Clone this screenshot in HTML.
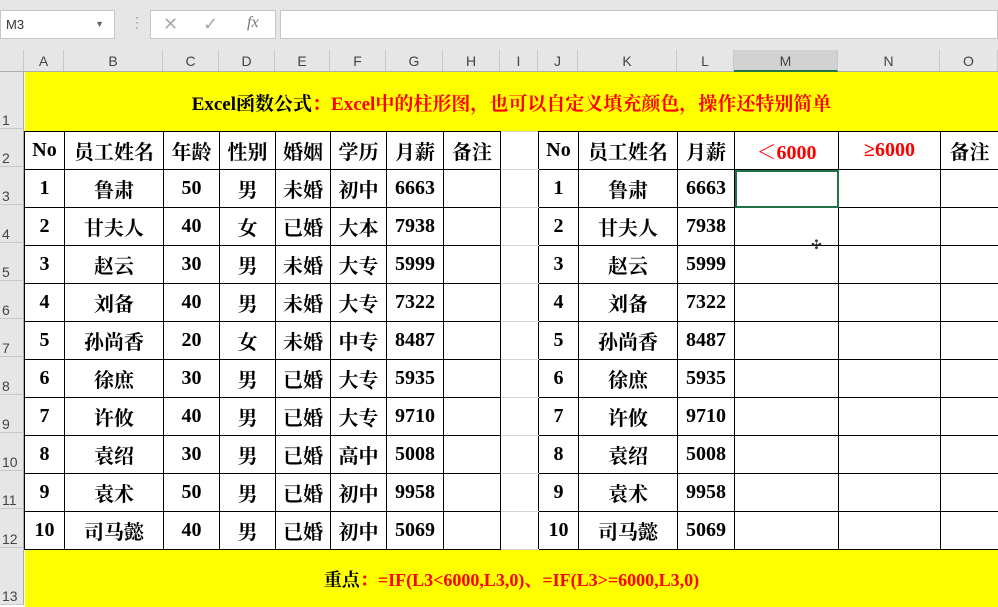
<!DOCTYPE html>
<html><head><meta charset="utf-8"><style>
body{margin:0;width:998px;height:605px;overflow:hidden;background:#fff;font-family:"Liberation Sans",sans-serif;position:relative}
.top{position:absolute;left:0;top:0;width:998px;height:50px;background:#e6e6e6}
.nb{position:absolute;left:0;top:10px;width:115px;height:29px;background:#fff;border:1px solid #c6c6c6;box-sizing:border-box;font-size:13px;line-height:27px;padding-left:5px;color:#333}
.fx{position:absolute;left:150px;top:10px;width:126px;height:29px;background:#fff;border:1px solid #c6c6c6;box-sizing:border-box;color:#aaa}
.fb{position:absolute;left:280px;top:10px;width:718px;height:29px;background:#fff;border:1px solid #c6c6c6;box-sizing:border-box}
.ch{position:absolute;top:50px;left:0;width:998px;height:22px;background:#e6e6e6;border-bottom:1px solid #ababab;box-sizing:border-box}
.ch div{position:absolute;top:0;height:21px;line-height:22px;text-align:center;font-size:14px;color:#444;border-right:1px solid #c8c8c8;box-sizing:border-box}
.rh{position:absolute;left:0;width:24px;background:#e6e6e6;border-bottom:1px solid #c8c8c8;border-right:1px solid #ababab;box-sizing:border-box;font-size:14px;color:#444;display:flex;align-items:flex-end;padding-left:2px;padding-bottom:0px}
table{position:absolute;left:24px;top:72px;border-collapse:collapse;table-layout:fixed;width:974px;font-family:"Liberation Serif","Noto Serif CJK SC",serif;font-weight:bold;font-size:20px}
td{border:1px solid #000;padding:0;text-align:center;height:37px;overflow:hidden;white-space:nowrap}
td.g{border-top:1px solid #d4d4d4;border-bottom:1px solid #d4d4d4}
.y td{background:#ff0;border:none;height:57px}
.r{color:#f00}
</style></head><body>
<div class="top">
<div class="nb">M3<span style="position:absolute;right:10px;top:0;font-size:9px;color:#666">▼</span></div>
<div style="position:absolute;left:130px;top:14px;color:#999;font-size:14px">⋮</div>
<div class="fx"><span style="position:absolute;left:12px;top:3px;font-size:18px">✕</span><span style="position:absolute;left:52px;top:3px;font-size:18px">✓</span><span style="position:absolute;left:96px;top:3px;font-size:16px;font-style:italic;font-family:'Liberation Serif',serif;color:#777">fx</span></div>
<div class="fb"></div>
</div>
<div class="ch">
<div style="left:0;width:24px"></div>
<div style="left:24px;width:40px">A</div><div style="left:64px;width:99px">B</div><div style="left:163px;width:56px">C</div><div style="left:219px;width:56px">D</div><div style="left:275px;width:55px">E</div><div style="left:330px;width:56px">F</div><div style="left:386px;width:57px">G</div><div style="left:443px;width:57px">H</div><div style="left:500px;width:38px">I</div><div style="left:538px;width:40px">J</div><div style="left:578px;width:99px">K</div><div style="left:677px;width:57px">L</div><div style="left:734px;width:104px;background:#d2d2d2;border-bottom:2px solid #217346;height:22px">M</div><div style="left:838px;width:102px">N</div><div style="left:940px;width:58px">O</div>
</div>
<div class="rh" style="top:72px;height:57px">1</div>
<div class="rh" style="top:129px;height:38px">2</div>
<div class="rh" style="top:167px;height:38px">3</div>
<div class="rh" style="top:205px;height:38px">4</div>
<div class="rh" style="top:243px;height:38px">5</div>
<div class="rh" style="top:281px;height:38px">6</div>
<div class="rh" style="top:319px;height:38px">7</div>
<div class="rh" style="top:357px;height:38px">8</div>
<div class="rh" style="top:395px;height:38px">9</div>
<div class="rh" style="top:433px;height:38px">10</div>
<div class="rh" style="top:471px;height:38px">11</div>
<div class="rh" style="top:509px;height:39px">12</div>
<div class="rh" style="top:548px;height:57px">13</div>
<table>
<colgroup><col style="width:40px"><col style="width:99px"><col style="width:56px"><col style="width:56px"><col style="width:55px"><col style="width:56px"><col style="width:57px"><col style="width:57px"><col style="width:38px"><col style="width:40px"><col style="width:99px"><col style="width:57px"><col style="width:104px"><col style="width:102px"><col style="width:58px"></colgroup>
<tr class="y"><td colspan="15" style="font-size:19px;padding-top:2px">Excel函数公式<span class="r">：Excel中的柱形图，也可以自定义填充颜色，操作还特别简单</span></td></tr>
<tr><td>No</td><td>员工姓名</td><td>年龄</td><td>性别</td><td>婚姻</td><td>学历</td><td>月薪</td><td>备注</td><td class="g"></td><td>No</td><td>员工姓名</td><td>月薪</td><td class="r">＜6000</td><td class="r">≥6000</td><td>备注</td></tr>
<tr><td>1</td><td>鲁肃</td><td>50</td><td>男</td><td>未婚</td><td>初中</td><td>6663</td><td></td><td class="g"></td><td>1</td><td>鲁肃</td><td>6663</td><td style="outline:2px solid #217346;outline-offset:-2px"></td><td></td><td></td></tr>
<tr><td>2</td><td>甘夫人</td><td>40</td><td>女</td><td>已婚</td><td>大本</td><td>7938</td><td></td><td class="g"></td><td>2</td><td>甘夫人</td><td>7938</td><td></td><td></td><td></td></tr>
<tr><td>3</td><td>赵云</td><td>30</td><td>男</td><td>未婚</td><td>大专</td><td>5999</td><td></td><td class="g"></td><td>3</td><td>赵云</td><td>5999</td><td></td><td></td><td></td></tr>
<tr><td>4</td><td>刘备</td><td>40</td><td>男</td><td>未婚</td><td>大专</td><td>7322</td><td></td><td class="g"></td><td>4</td><td>刘备</td><td>7322</td><td></td><td></td><td></td></tr>
<tr><td>5</td><td>孙尚香</td><td>20</td><td>女</td><td>未婚</td><td>中专</td><td>8487</td><td></td><td class="g"></td><td>5</td><td>孙尚香</td><td>8487</td><td></td><td></td><td></td></tr>
<tr><td>6</td><td>徐庶</td><td>30</td><td>男</td><td>已婚</td><td>大专</td><td>5935</td><td></td><td class="g"></td><td>6</td><td>徐庶</td><td>5935</td><td></td><td></td><td></td></tr>
<tr><td>7</td><td>许攸</td><td>40</td><td>男</td><td>已婚</td><td>大专</td><td>9710</td><td></td><td class="g"></td><td>7</td><td>许攸</td><td>9710</td><td></td><td></td><td></td></tr>
<tr><td>8</td><td>袁绍</td><td>30</td><td>男</td><td>已婚</td><td>高中</td><td>5008</td><td></td><td class="g"></td><td>8</td><td>袁绍</td><td>5008</td><td></td><td></td><td></td></tr>
<tr><td>9</td><td>袁术</td><td>50</td><td>男</td><td>已婚</td><td>初中</td><td>9958</td><td></td><td class="g"></td><td>9</td><td>袁术</td><td>9958</td><td></td><td></td><td></td></tr>
<tr><td>10</td><td>司马懿</td><td>40</td><td>男</td><td>已婚</td><td>初中</td><td>5069</td><td></td><td class="g"></td><td>10</td><td>司马懿</td><td>5069</td><td></td><td></td><td></td></tr>
<tr class="y"><td colspan="15" style="font-size:18px">重点<span class="r">：=IF(L3&lt;6000,L3,0)、=IF(L3&gt;=6000,L3,0)</span></td></tr>
</table>
<div style="position:absolute;left:811px;top:237px;font-size:13px;color:#333">✣</div>
</body></html>
